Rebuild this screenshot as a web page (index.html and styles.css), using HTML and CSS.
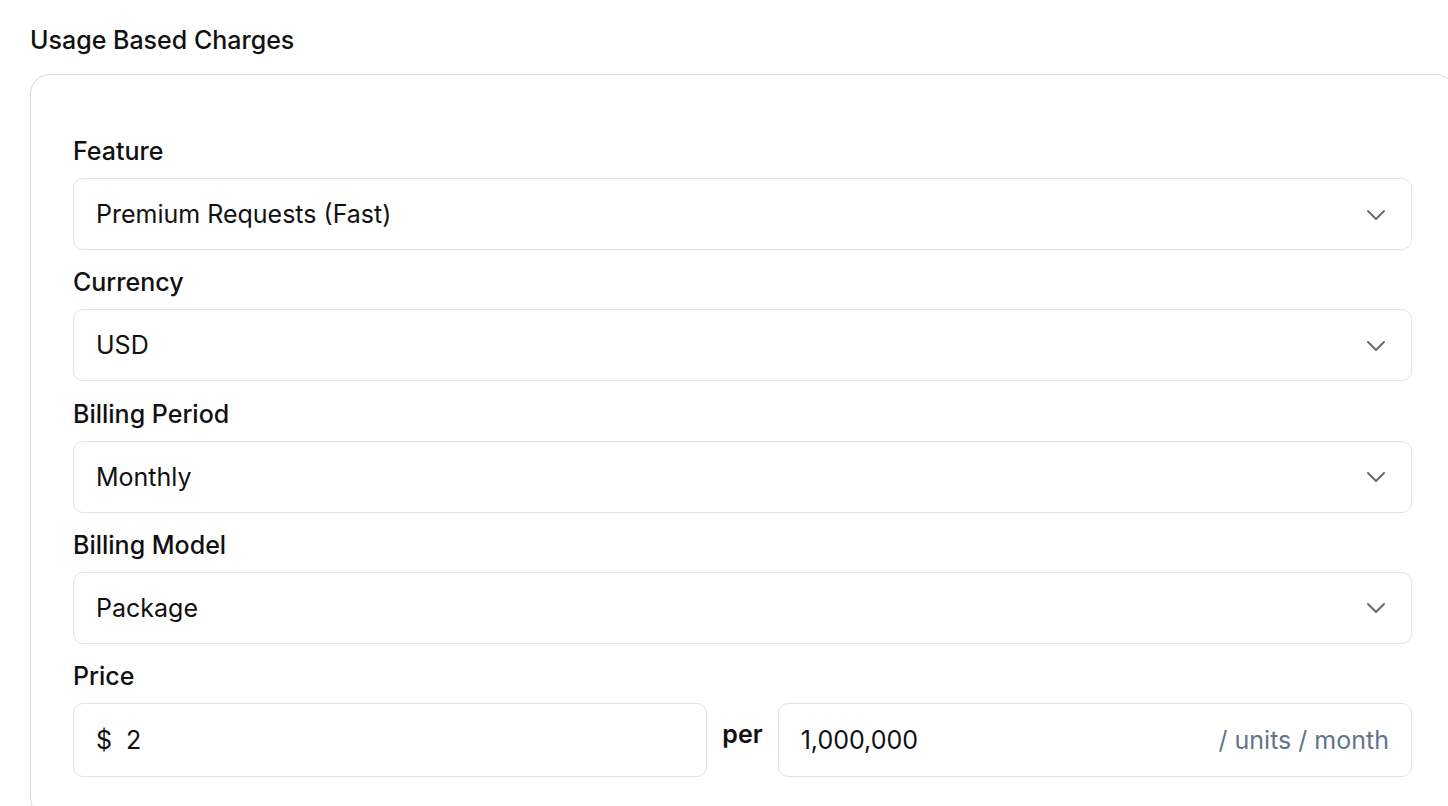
FILE: index.html
```html
<!DOCTYPE html>
<html lang="en">
<head>
<meta charset="utf-8">
<title>Usage Based Charges</title>
<link rel="stylesheet" href="styles.css">
</head>
<body>
<main class="page">
  <h2 class="section-title">Usage Based Charges</h2>
  <section class="card">
    <div class="field">
      <label class="field-label">Feature</label>
      <div class="select">
        <span class="select-value">Premium Requests (Fast)</span>
        <svg class="chevron" viewBox="0 0 20 12" width="20" height="12"><path d="M2 2l8 8 8-8" fill="none" stroke="currentColor" stroke-width="2" stroke-linecap="round" stroke-linejoin="round"/></svg>
      </div>
    </div>
    <div class="field">
      <label class="field-label">Currency</label>
      <div class="select">
        <span class="select-value">USD</span>
        <svg class="chevron" viewBox="0 0 20 12" width="20" height="12"><path d="M2 2l8 8 8-8" fill="none" stroke="currentColor" stroke-width="2" stroke-linecap="round" stroke-linejoin="round"/></svg>
      </div>
    </div>
    <div class="field">
      <label class="field-label">Billing Period</label>
      <div class="select">
        <span class="select-value">Monthly</span>
        <svg class="chevron" viewBox="0 0 20 12" width="20" height="12"><path d="M2 2l8 8 8-8" fill="none" stroke="currentColor" stroke-width="2" stroke-linecap="round" stroke-linejoin="round"/></svg>
      </div>
    </div>
    <div class="field">
      <label class="field-label">Billing Model</label>
      <div class="select">
        <span class="select-value">Package</span>
        <svg class="chevron" viewBox="0 0 20 12" width="20" height="12"><path d="M2 2l8 8 8-8" fill="none" stroke="currentColor" stroke-width="2" stroke-linecap="round" stroke-linejoin="round"/></svg>
      </div>
    </div>
    <div class="field">
      <label class="field-label">Price</label>
      <div class="price-row">
        <div class="input">
          <span class="prefix">$</span>
          <span class="input-value">2</span>
        </div>
        <span class="per">per</span>
        <div class="input">
          <span class="input-value">1,000,000</span>
          <span class="suffix">/ units / month</span>
        </div>
      </div>
    </div>
  </section>
</main>
</body>
</html>
```
FILE: styles.css
```css
* { box-sizing: border-box; }
html, body { margin: 0; padding: 0; background: #ffffff; }
body {
  font-family: Inter, "Noto Sans", "Liberation Sans", sans-serif;
  color: #111111;
  overflow: hidden;
  width: 1448px;
  height: 806px;
}
.page {
  padding: 25px 0 0 30px;
}
.section-title {
  margin: 0;
  font-size: 25px;
  line-height: 30px;
  font-weight: 500;
  color: #111111;
}
.card {
  margin-top: 19px;
  width: 1426px;
  border: 1px solid #d9dadf;
  border-radius: 20px;
  padding: 61px 43px 40px 42px;
  display: flex;
  flex-direction: column;
  gap: 17.25px;
}
.field {
  display: flex;
  flex-direction: column;
  gap: 12px;
}
.field-label {
  font-size: 25px;
  line-height: 30px;
  font-weight: 500;
  color: #111111;
}
.select {
  height: 72px;
  border: 1px solid #e3e4e8;
  border-radius: 10px;
  padding: 0 25px 0 22px;
  display: flex;
  align-items: center;
  justify-content: space-between;
}
.select-value {
  font-size: 25px;
  line-height: 30px;
  color: #111111;
}
.chevron {
  color: #6b6b6b;
  width: 20px;
  height: 12px;
  margin-top: 1px;
}
.price-row {
  display: flex;
  align-items: center;
  gap: 15px;
}
.input {
  flex: 1;
  height: 74px;
  border: 1px solid #e3e4e8;
  border-radius: 10px;
  padding: 0 22px;
  display: flex;
  align-items: center;
  font-size: 25px;
  line-height: 30px;
}
.prefix {
  margin-right: 14px;
}
.input-value { color: #111111; }
.suffix {
  margin-left: auto;
  color: #64748b;
}
.per {
  font-size: 25px;
  line-height: 30px;
  font-weight: 600;
  color: #111111;
  margin-top: -12px;
}
```
